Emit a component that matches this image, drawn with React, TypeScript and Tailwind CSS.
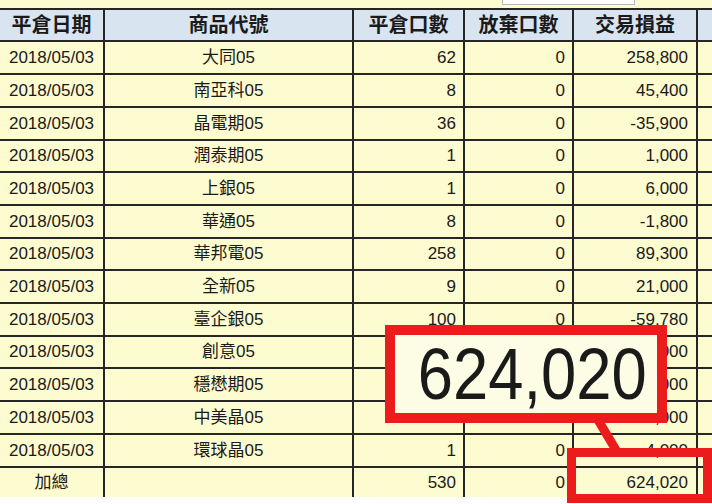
const rows: [string, string, string, string, string][] = [
  ["2018/05/03", "大同05", "62", "0", "258,800"],
  ["2018/05/03", "南亞科05", "8", "0", "45,400"],
  ["2018/05/03", "晶電期05", "36", "0", "-35,900"],
  ["2018/05/03", "潤泰期05", "1", "0", "1,000"],
  ["2018/05/03", "上銀05", "1", "0", "6,000"],
  ["2018/05/03", "華通05", "8", "0", "-1,800"],
  ["2018/05/03", "華邦電05", "258", "0", "89,300"],
  ["2018/05/03", "全新05", "9", "0", "21,000"],
  ["2018/05/03", "臺企銀05", "100", "0", "-59,780"],
  ["2018/05/03", "創意05", "20", "0", "140,000"],
  ["2018/05/03", "穩懋期05", "17", "0", "65,000"],
  ["2018/05/03", "中美晶05", "9", "0", "91,000"],
  ["2018/05/03", "環球晶05", "1", "0", "4,000"],
];

const headers = ["平倉日期", "商品代號", "平倉口數", "放棄口數", "交易損益"];

const font = { fontFamily: '"Liberation Sans", "Noto Sans CJK TC", sans-serif' };

export default function App() {
  return (
    <div className="relative w-[712px] h-[504px] bg-white overflow-hidden text-[#1a1a1a]" style={font}>
      <div className="h-[8px] bg-[#fdfbd0]">
        <div className="ml-[502px] w-[133px] h-[5px] bg-white border border-t-0 border-[#b8b8b8]" />
      </div>

      <div className="grid grid-cols-[103px_247px_109px_107px_122px_1fr] grid-rows-[30px_31px_31px_31px_30px_31px_31px_30px_31px_31px_30px_31px_31px_31px_29px] gap-[2px] pt-[2px] bg-[#262626] h-[489px] text-[17px]">
        {headers.map((h) => (
          <div key={h} className="bg-[#d9e4f1] flex items-center justify-center font-bold text-[20px]">
            {h}
          </div>
        ))}
        <div className="bg-[#d9e4f1]" />

        {rows.map((r, i) => (
          <Row key={i} r={r} />
        ))}

        <div className="bg-[#fdfbd0] flex items-center justify-center">加總</div>
        <div className="bg-[#fdfbd0]" />
        <div className="bg-[#fdfbd0] flex items-center justify-end pr-[7px]">530</div>
        <div className="bg-[#fdfbd0] flex items-center justify-end pr-[7px]">0</div>
        <div className="bg-[#fdfbd0] flex items-center justify-end pr-[8px]">624,020</div>
        <div className="bg-[#fdfbd0]" />
      </div>

      {/* callout */}
      <div className="absolute left-[385px] top-[325px] w-[282px] h-[98px] border-[10px] border-[#ec1c1c] bg-[#fdfde6] flex items-center justify-center">
        <span className="text-[72px] leading-none scale-x-[0.88] pl-[14px] blur-[0.4px]" style={font}>
          624,020
        </span>
      </div>
      <svg className="absolute left-0 top-0" width="712" height="504">
        <line x1="598" y1="420" x2="616" y2="450" stroke="#ec1c1c" strokeWidth="9" />
      </svg>
      <div className="absolute left-[567px] top-[448px] w-[145px] h-[55px] border-[9px] border-[#ec1c1c]" />
    </div>
  );
}

function Row({ r }: { r: [string, string, string, string, string] }) {
  return (
    <>
      <div className="bg-[#fdfbd0] flex items-center justify-center">{r[0]}</div>
      <div className="bg-[#fdfbd0] flex items-center justify-center">{r[1]}</div>
      <div className="bg-[#fdfbd0] flex items-center justify-end pr-[7px]">{r[2]}</div>
      <div className="bg-[#fdfbd0] flex items-center justify-end pr-[7px]">{r[3]}</div>
      <div className="bg-[#fdfbd0] flex items-center justify-end pr-[8px]">{r[4]}</div>
      <div className="bg-[#fdfbd0]" />
    </>
  );
}
